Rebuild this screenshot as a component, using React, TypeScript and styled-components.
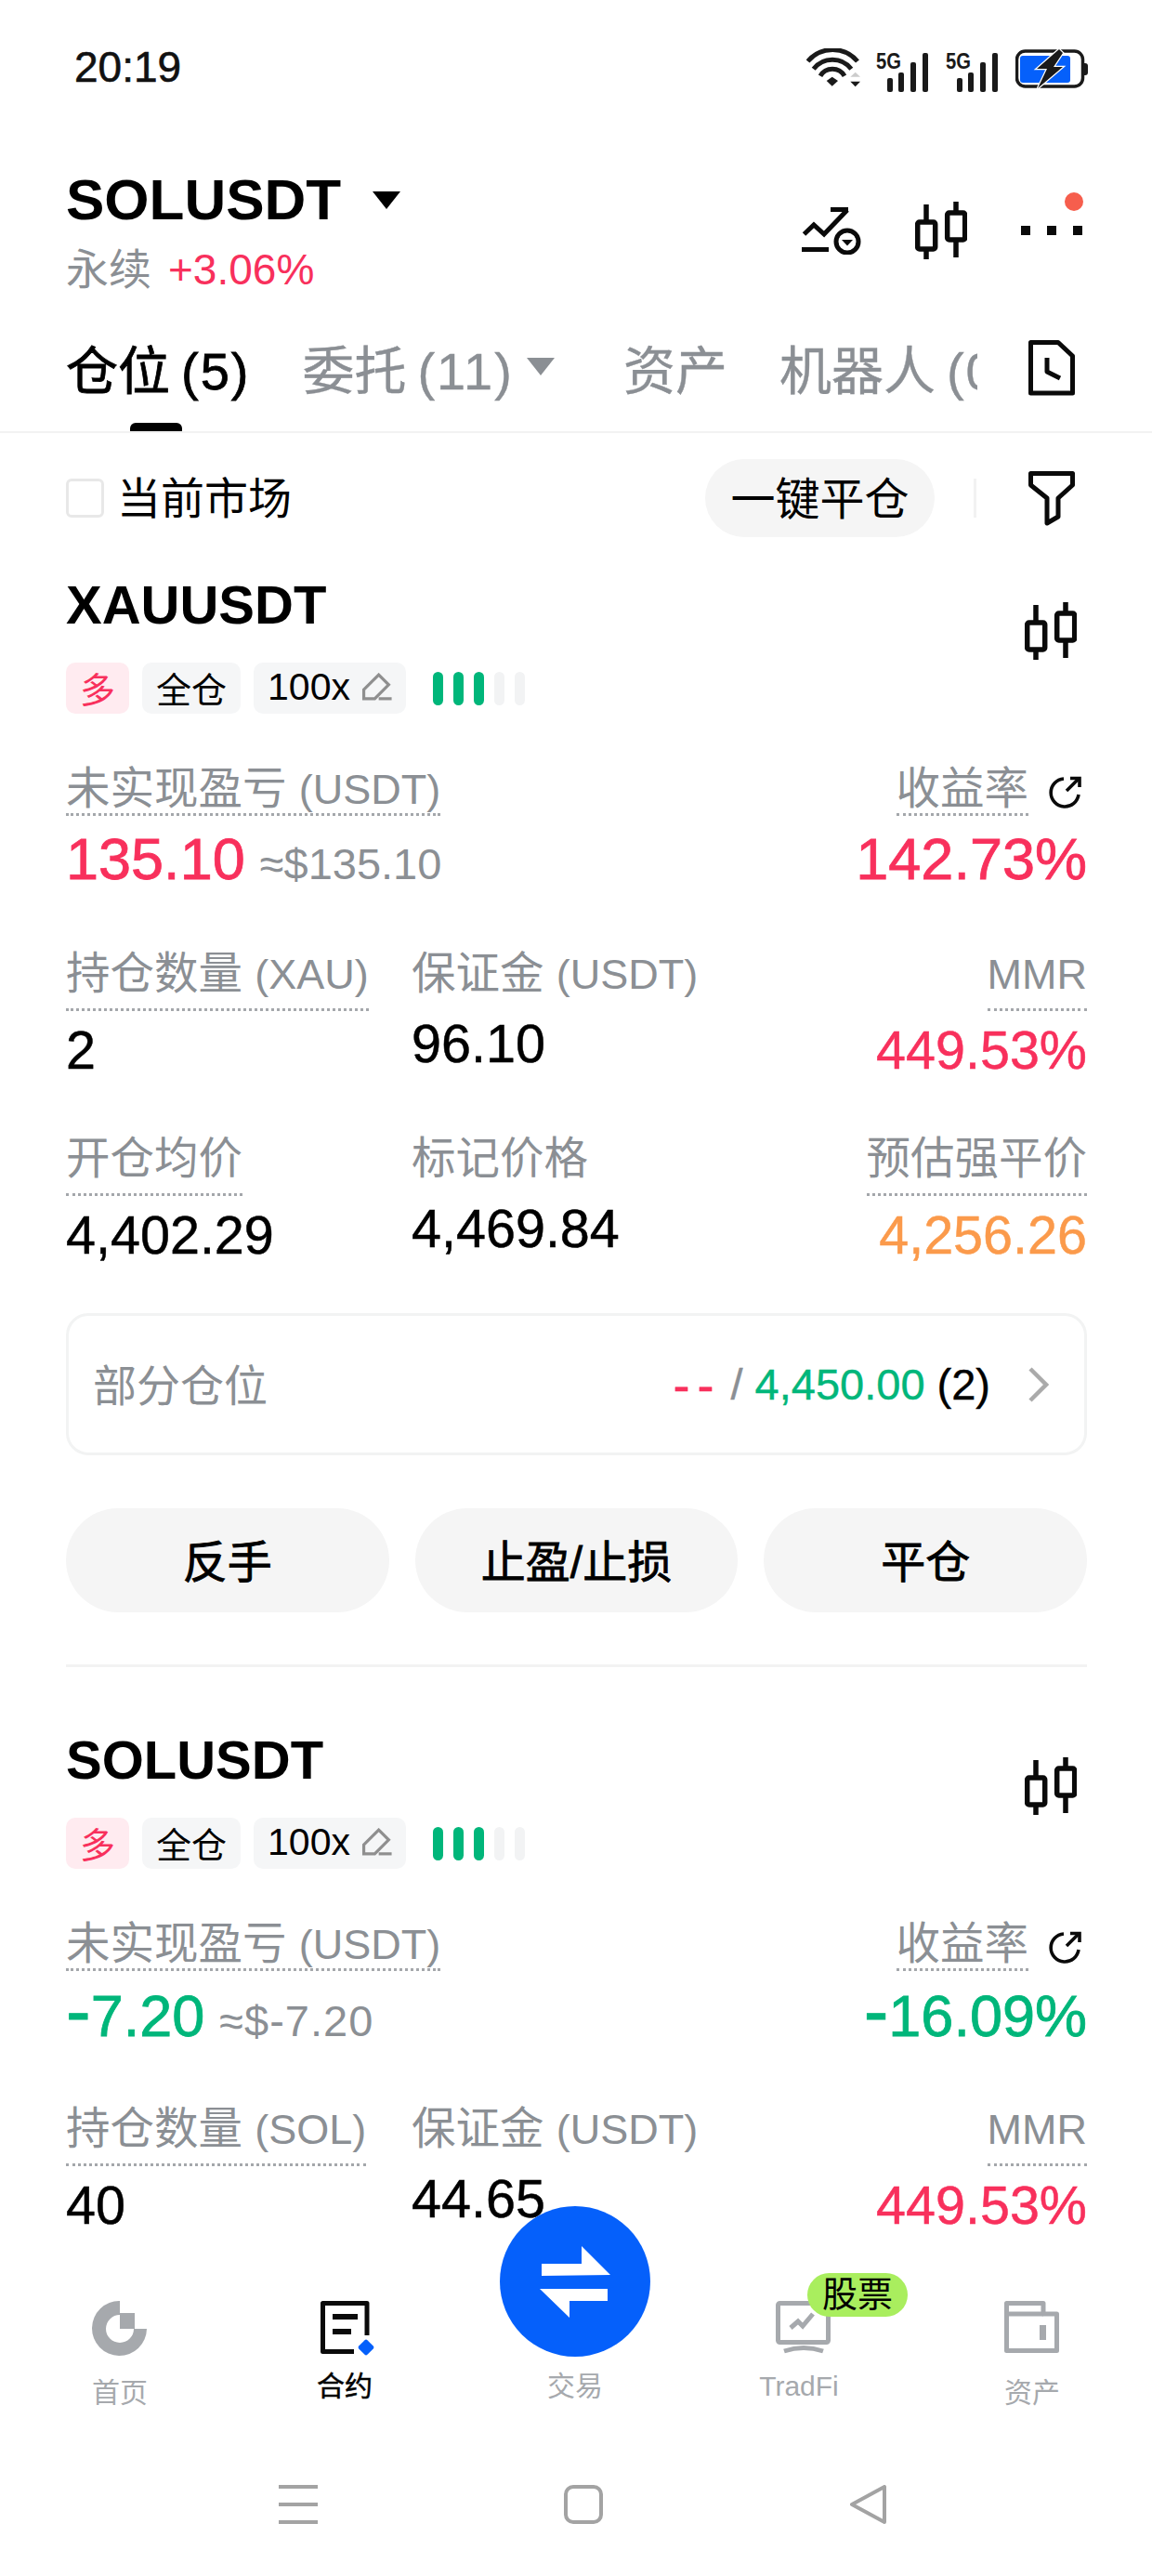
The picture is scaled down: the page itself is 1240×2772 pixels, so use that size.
import React from 'react'
import styled, { createGlobalStyle } from 'styled-components'

const RED = '#f8305c'
const GREEN = '#00b67a'
const ORANGE = '#fb9a4b'
const GREY = '#8b8f94'
const NAV_GREY = '#a6a9ad'
const BLUE = '#0560fb'

const GlobalStyle = createGlobalStyle`
  html, body {
    margin: 0;
    padding: 0;
    background: #fff;
  }
  body {
    font-family: "Liberation Sans", "Noto Sans CJK SC", sans-serif;
    color: #000;
  }
  * {
    box-sizing: border-box;
  }
`

type Tone = 'red' | 'green' | 'orange' | 'black' | 'grey'

const toneColor = (tone: Tone = 'black') => {
  if (tone === 'red') return RED
  if (tone === 'green') return GREEN
  if (tone === 'orange') return ORANGE
  if (tone === 'grey') return GREY
  return '#000'
}

function SignalIcon() {
  return (
    <svg width="57" height="50" viewBox="0 -8 57 50">
      <text x="0" y="17" fontSize="23" fontWeight="700" textLength="27" lengthAdjust="spacingAndGlyphs" fill="#1a1a1a">
        5G
      </text>
      <g fill="#1a1a1a">
        <rect x="12" y="27" width="6" height="15" rx="2" />
        <rect x="24" y="21" width="6" height="21" rx="2" />
        <rect x="37" y="10" width="6" height="32" rx="2" />
        <rect x="50" y="0" width="6" height="42" rx="2" />
      </g>
    </svg>
  )
}

function WifiIcon() {
  return (
    <svg width="60" height="44" viewBox="0 0 60 44" fill="none">
      <g stroke="#1a1a1a" strokeWidth="5">
        <path d="M1.5 14 A35 35 0 0 1 55 14" />
        <path d="M7.7 22.3 A25.6 25.6 0 0 1 48.3 22.3" />
        <path d="M15 29.7 A15 15 0 0 1 41 29.7" />
      </g>
      <path d="M21.7 35 L27.7 30.7 L34 35 L27.7 40.7 Z" fill="#1a1a1a" />
      <path d="M47.3 30.7 L52.7 25.7 L58 30.7 Z" fill="#ccc" />
      <path d="M47.3 35.7 L58 35.7 L52.7 41.3 Z" fill="#1a1a1a" />
    </svg>
  )
}

function BatteryIcon() {
  return (
    <svg width="79" height="44" viewBox="0 0 79 44" fill="none">
      <rect x="1.5" y="3" width="71" height="38" rx="9" stroke="#1a1a1a" strokeWidth="3.5" />
      <rect x="5" y="8" width="54" height="29" rx="3" fill={BLUE} />
      <path d="M73 16 h2 a3 3 0 0 1 3 3 v7 a3 3 0 0 1 -3 3 h-2 Z" fill="#1a1a1a" />
      <path
        d="M47 1 L23 22 L34 22 L24 43 L51 20 L41 20 L51 5 Z"
        fill="#1a1a1a"
        stroke="#fff"
        strokeWidth="2.5"
        paintOrder="stroke"
      />
    </svg>
  )
}

function TrendIcon() {
  return (
    <svg width="64" height="52" viewBox="0 0 64 52" fill="none">
      <path d="M2.5 30 L13 20 L24 30 L49 4" stroke="#0a0a0a" strokeWidth="5" />
      <path d="M31 3.5 H50" stroke="#0a0a0a" strokeWidth="5" />
      <rect x="0" y="44" width="29" height="5" fill="#0a0a0a" />
      <circle cx="49" cy="38" r="12" stroke="#0a0a0a" strokeWidth="5" />
      <path d="M43 36 H55 L49 42.5 Z" fill="#0a0a0a" />
    </svg>
  )
}

function CandleIcon() {
  return (
    <svg width="56" height="62" viewBox="0 0 56 62" fill="none" stroke="#0a0a0a" strokeWidth="5.5">
      <path d="M12 3 V22 M12 52 V62 M44 0 V12 M44 42 V60" />
      <rect x="2.7" y="22" width="19" height="29" rx="2" />
      <rect x="34.7" y="12" width="19" height="29" rx="2" />
    </svg>
  )
}

function DocClockIcon() {
  return (
    <svg width="50" height="60" viewBox="0 0 50 60" fill="none" stroke="#0a0a0a" strokeWidth="5" strokeLinejoin="round">
      <path d="M2.5 2.5 H32 L47.5 17 V57 H2.5 Z" />
      <path d="M20 19 V34 L34 41" />
    </svg>
  )
}

function FunnelIcon() {
  return (
    <svg width="50" height="59" viewBox="0 0 50 59" fill="none" stroke="#0a0a0a" strokeWidth="5" strokeLinejoin="round">
      <path d="M2.5 2.5 H47.5 V15 L32 29 V49 L20 56 V29 L2.5 15 Z" />
    </svg>
  )
}

function PencilIcon() {
  return (
    <svg width="33" height="30" viewBox="0 0 30 28" fill="none" stroke="#8f8f8f" strokeWidth="3">
      <path d="M2 26 V17 L17 2 L27 12 L13 26 Z" />
      <path d="M17 26 H30" />
    </svg>
  )
}

function ReturnIcon() {
  return (
    <svg width="36" height="36" viewBox="0 0 36 36" fill="none" stroke="#0a0a0a" strokeWidth="3.6">
      <path d="M16 4 A15 15 0 1 0 32 21" />
      <path d="M19 17 L32 4" />
      <path d="M23 3.5 H33 V13" />
    </svg>
  )
}

function ChevronIcon() {
  return (
    <svg width="22" height="38" viewBox="0 0 22 38" fill="none" stroke="#aaa" strokeWidth="4.5">
      <path d="M2 2 L19 19 L2 36" />
    </svg>
  )
}

function HomeIcon() {
  return (
    <svg width="60" height="60" viewBox="0 0 60 60" fill={NAV_GREY}>
      <path d="M30 0 A29.5 29.5 0 1 0 59 30 H45 A15 15 0 1 1 30 15 Z" />
      <rect x="30" y="13" width="16" height="17" />
    </svg>
  )
}

function ContractIcon() {
  return (
    <svg width="60" height="60" viewBox="0 0 60 60" fill="none">
      <path d="M50 37 V2.5 H2.5 V54.5 H36" stroke="#0a0a0a" strokeWidth="5" strokeLinejoin="round" />
      <rect x="13" y="14" width="27" height="6" fill="#0a0a0a" />
      <rect x="13" y="30" width="20" height="6" fill="#0a0a0a" />
      <rect x="42.5" y="43.5" width="13" height="13" rx="2" fill={BLUE} transform="rotate(45 49 50)" />
    </svg>
  )
}

function TradFiIcon() {
  return (
    <svg width="60" height="60" viewBox="0 0 60 60" fill="none" stroke={NAV_GREY} strokeWidth="5">
      <rect x="2.5" y="2.5" width="54" height="42" rx="2" />
      <path d="M16 29 L24 22 L29 27 L40 14" />
      <path d="M9 54 Q30 47 51 54" />
    </svg>
  )
}

function AssetsIcon() {
  return (
    <svg width="60" height="60" viewBox="0 0 60 60" fill="none" stroke={NAV_GREY} strokeWidth="5" strokeLinejoin="round">
      <path d="M2.5 2.5 H42 V14 H56.5 V53.5 H2.5 Z" />
      <path d="M2.5 14 H42" />
      <path d="M41.5 26 V42" strokeWidth="7" />
    </svg>
  )
}

function SwapIcon() {
  return (
    <svg width="162" height="162" viewBox="0 0 162 162" fill="#fff">
      <path d="M45 62 H88 V43 L119 74 L45 75 Z" />
      <path d="M43 89 L116 89 V102 H75 V120 Z" />
    </svg>
  )
}

const Screen = styled.div`
  position: relative;
  width: 1240px;
  height: 2772px;
  overflow: hidden;
  background: #fff;
`

const StatusBar = styled.div`
  display: flex;
  align-items: center;
  justify-content: space-between;
  height: 144px;
  padding: 4px 68px 0 80px;
`

const Clock = styled.span`
  font-size: 46px;
  margin-top: -4px;
  color: #111;
  -webkit-text-stroke: 0.6px #111;
`

const StatusIcons = styled.div`
  display: flex;
  align-items: center;
  gap: 18px;

  svg:first-child {
    margin-right: -3px;
  }
`

const Header = styled.header`
  display: flex;
  justify-content: space-between;
  height: 200px;
  padding: 36px 75px 0 71px;
`

const TitleRow = styled.div`
  display: flex;
  align-items: center;
  gap: 34px;
`

const Symbol = styled.h1`
  margin: 0;
  font-size: 62px;
  line-height: 70px;
  font-weight: 700;
`

const Caret = styled.span<{ $color?: string; $gap?: number }>`
  display: inline-block;
  width: 0;
  height: 0;
  border-left: 15px solid transparent;
  border-right: 15px solid transparent;
  border-top: 19px solid ${({ $color }) => $color || '#000'};
  margin-right: ${({ $gap }) => $gap || 0}px;
`

const SubRow = styled.div`
  display: flex;
  gap: 18px;
  margin-top: 10px;
  font-size: 46px;
  line-height: 60px;
  color: ${GREY};
`

const Change = styled.span`
  color: ${RED};
`

const Actions = styled.div`
  display: flex;
  align-items: center;
  gap: 58px;
  height: 62px;
  margin-top: 37px;
`

const More = styled.div`
  position: relative;
  display: flex;
  gap: 18px;
  width: 66px;
  justify-content: space-between;
`

const Dot = styled.span`
  width: 10px;
  height: 10px;
  background: #0a0a0a;
`

const RedDot = styled.span`
  position: absolute;
  right: -1px;
  top: -36px;
  width: 20px;
  height: 20px;
  border-radius: 50%;
  background: #f65e4d;
`

const TabBar = styled.nav`
  display: flex;
  align-items: stretch;
  justify-content: space-between;
  height: 122px;
  padding: 0 83px 0 71px;
  border-bottom: 2px solid #f2f2f2;
`

const TabList = styled.div`
  display: flex;
  align-items: stretch;
  gap: 56px;
  width: 981px;
  overflow: hidden;
`

const Tab = styled.div<{ $active?: boolean }>`
  position: relative;
  flex: none;
  display: flex;
  align-items: center;
  gap: 14px;
  padding-bottom: 20px;
  font-size: 56px;
  white-space: nowrap;
  color: ${({ $active }) => ($active ? '#000' : GREY)};
  -webkit-text-stroke: ${({ $active }) => ($active ? '0.8px #000' : '0.4px ' + GREY)};
`

const TabCount = styled.span`
  letter-spacing: 2px;
  margin-left: 12px;
`

const TabMark = styled.span`
  position: absolute;
  left: 69px;
  bottom: 0;
  width: 56px;
  height: 9px;
  border-radius: 6px 6px 0 0;
  background: #000;
`

const TabIcon = styled.div`
  display: flex;
  align-items: center;
  padding-bottom: 16px;
`

const FilterRow = styled.div`
  display: flex;
  align-items: center;
  justify-content: space-between;
  height: 140px;
  padding: 0 83px 0 71px;
`

const CheckLabel = styled.label`
  display: flex;
  align-items: center;
  gap: 14px;
  font-size: 47px;
`

const CheckText = styled.span`
  margin-top: -7px;
`

const CheckBox = styled.span`
  width: 41px;
  height: 42px;
  border: 3px solid #e8e8e8;
  border-radius: 6px;
`

const FilterTools = styled.div`
  display: flex;
  align-items: center;
`

const CloseAll = styled.button`
  width: 247px;
  height: 84px;
  border: none;
  border-radius: 42px;
  background: #f5f5f5;
  font: inherit;
  font-size: 48px;
  color: #000;
  padding: 0 0 6px;
  margin-right: 42px;
`

const ToolDivider = styled.span`
  width: 3px;
  height: 42px;
  background: #f2f2f2;
  margin-right: 56px;
`

const Card = styled.section`
  padding: 10px 70px 0 71px;
`

const CardHead = styled.div`
  display: flex;
  align-items: center;
  justify-content: space-between;
`

const CardSymbol = styled.h2`
  margin: 0;
  font-size: 58px;
  line-height: 70px;
  font-weight: 700;
`

const CandleSlot = styled.div`
  display: flex;
  margin: 0 11px 26px 0;
`

const Tags = styled.div`
  display: flex;
  align-items: center;
  gap: 14px;
  margin-top: 27px;
`

const Tag = styled.span<{ $long?: boolean }>`
  display: inline-flex;
  align-items: center;
  gap: 12px;
  height: 55px;
  padding: 0 15px 3px;
  border-radius: 10px;
  font-size: 38px;
  background: ${({ $long }) => ($long ? '#ffebf0' : '#f5f6f7')};
  color: ${({ $long }) => ($long ? RED : '#000')};
`

const Leverage = styled.span`
  font-size: 41px;
`

const Bars = styled.div`
  display: flex;
  gap: 11px;
  margin-left: 15px;
`

const Bar = styled.span<{ $on?: boolean }>`
  width: 11px;
  height: 36px;
  border-radius: 6px;
  background: ${({ $on }) => ($on ? GREEN : '#f2f3f4')};
`

const Pnl = styled.div`
  display: flex;
  justify-content: space-between;
  margin-top: 58px;
`

const PnlSide = styled.div<{ $end?: boolean }>`
  display: flex;
  flex-direction: column;
  align-items: ${({ $end }) => ($end ? 'flex-end' : 'flex-start')};
`

const LabelWrap = styled.div`
  display: flex;
  align-items: center;
  gap: 22px;
  margin-right: 5px;
`

const Label = styled.span<{ $tight?: boolean; $plain?: boolean }>`
  display: block;
  height: ${({ $tight, $plain }) => ($plain ? 56 : $tight ? 52 : 63)}px;
  font-size: 47.5px;
  line-height: 46px;
  white-space: nowrap;
  color: ${GREY};
  border-bottom: ${({ $plain }) => ($plain ? 'none' : '3px dotted #a4a7ab')};
`

const LabelUnit = styled.span`
  font-size: 45px;
`

const PnlValueRow = styled.div`
  display: flex;
  align-items: baseline;
  gap: 16px;
  height: 64px;
  margin-top: 14px;
`

const PnlValue = styled.span<{ $tone: Tone }>`
  font-size: 63px;
  line-height: 64px;
  white-space: nowrap;
  margin-top: ${({ $tone }) => ($tone === 'green' ? '-3px' : '0')};
  color: ${({ $tone }) => toneColor($tone)};
  -webkit-text-stroke: 0.8px ${({ $tone }) => toneColor($tone)};

  &::first-letter {
    font-size: ${({ $tone }) => ($tone === 'green' ? '80px' : 'inherit')};
  }
`

const PnlApprox = styled.span<{ $wide?: boolean }>`
  font-size: 47px;
  white-space: nowrap;
  letter-spacing: ${({ $wide }) => ($wide ? '1px' : '0')};
  color: ${GREY};
`

const MetricGrid = styled.div`
  display: grid;
  grid-template-columns: 372px 1fr auto;
  row-gap: 64px;
  margin-top: 69px;
`

const Metric = styled.div<{ $end?: boolean }>`
  display: flex;
  flex-direction: column;
  align-items: ${({ $end }) => ($end ? 'flex-end' : 'flex-start')};
`

const MetricValue = styled.span<{ $tone?: Tone }>`
  margin-top: 12px;
  font-size: 57.5px;
  line-height: 60px;
  white-space: nowrap;
  color: ${({ $tone }) => toneColor($tone)};
  -webkit-text-stroke: 0.5px ${({ $tone }) => toneColor($tone)};
`

const PartialBox = styled.div`
  display: flex;
  align-items: center;
  justify-content: space-between;
  height: 153px;
  margin-top: 54px;
  padding: 0 38px 0 26px;
  border: 3px solid #f2f3f3;
  border-radius: 24px;
  font-size: 47px;
`

const PartialTitle = styled.span`
  color: ${GREY};
  margin-top: -5px;
`

const PartialRight = styled.div`
  display: flex;
  align-items: center;
`

const PartialPart = styled.span<{ $tone?: Tone; $gap?: number }>`
  color: ${({ $tone }) => toneColor($tone)};
  -webkit-text-stroke: 0.4px ${({ $tone }) => toneColor($tone)};
  margin-right: ${({ $gap }) => $gap || 0}px;
  white-space: pre;
`

const Dashes = styled(PartialPart)`
  font-size: 54px;
  letter-spacing: 8px;
`

const ActionRow = styled.div`
  display: flex;
  gap: 28px;
  margin-top: 57px;
`

const ActionButton = styled.button`
  flex: 1;
  height: 112px;
  padding: 0 0 5px;
  border: none;
  border-radius: 56px;
  background: #f5f5f5;
  font: inherit;
  font-size: 48px;
  color: #000;
  -webkit-text-stroke: 0.8px #000;
`

const CardDivider = styled.hr`
  height: 3px;
  margin: 56px 0 55px;
  border: none;
  background: #f3f3f3;
`

const BottomNav = styled.div`
  position: absolute;
  left: 0;
  right: 0;
  bottom: 0;
  height: 362px;
  background: #fff;
`

const NavRow = styled.div`
  display: grid;
  grid-template-columns: 258px 226px 270px 212px 1fr;
  padding-top: 66px;
`

const NavItem = styled.div<{ $nudge?: number }>`
  position: relative;
  display: flex;
  flex-direction: column;
  align-items: center;
  padding-left: ${({ $nudge }) => $nudge || 0}px;
`

const NavIconSlot = styled.div<{ $nudge?: number }>`
  width: 60px;
  height: 60px;
  margin-left: ${({ $nudge }) => $nudge || 0}px;
`

const NavLabel = styled.span<{ $active?: boolean; $low?: boolean }>`
  margin-top: ${({ $low }) => ($low ? 21 : 14)}px;
  font-size: 30px;
  line-height: 36px;
  color: ${({ $active }) => ($active ? '#000' : NAV_GREY)};
  -webkit-text-stroke: ${({ $active }) => ($active ? '0.5px #000' : '0')};
`

const SwapButton = styled.div`
  position: absolute;
  top: -102px;
  left: 50%;
  margin-left: -81px;
  width: 162px;
  height: 162px;
  border-radius: 50%;
  background: ${BLUE};
`

const StockBadge = styled.span`
  position: absolute;
  top: -30px;
  left: 115px;
  width: 108px;
  height: 47px;
  border-radius: 24px;
  background: #a9ee5e;
  font-size: 38px;
  line-height: 47px;
  text-align: center;
  color: #000;
`

const SystemBar = styled.div`
  display: flex;
  align-items: center;
  justify-content: space-between;
  height: 42px;
  margin-top: 81px;
  padding: 0 284px 0 300px;
`

const MenuLines = styled.div`
  display: flex;
  flex-direction: column;
  justify-content: space-between;
  width: 42px;
  height: 42px;
`

const MenuLine = styled.span`
  height: 4px;
  background: #a3a3a3;
`

const HomeKey = styled.span`
  width: 42px;
  height: 42px;
  border: 4px solid #a3a3a3;
  border-radius: 10px;
`

type MetricData = {
  label?: string
  unit?: string
  value: string
  tone?: Tone
  plain?: boolean
  end?: boolean
}

type Position = {
  symbol: string
  pnl: string
  approx: string
  rate: string
  tone: Tone
  metrics: MetricData[]
  more?: boolean
}

const positions: Position[] = [
  {
    symbol: 'XAUUSDT',
    pnl: '135.10',
    approx: '≈$135.10',
    rate: '142.73%',
    tone: 'red',
    more: true,
    metrics: [
      { label: '持仓数量 ', unit: '(XAU)', value: '2' },
      { label: '保证金 ', unit: '(USDT)', value: '96.10', plain: true },
      { unit: 'MMR', value: '449.53%', tone: 'red', end: true },
      { label: '开仓均价', value: '4,402.29' },
      { label: '标记价格', value: '4,469.84', plain: true },
      { label: '预估强平价', value: '4,256.26', tone: 'orange', end: true },
    ],
  },
  {
    symbol: 'SOLUSDT',
    pnl: '-7.20',
    approx: '≈$-7.20',
    rate: '-16.09%',
    tone: 'green',
    metrics: [
      { label: '持仓数量 ', unit: '(SOL)', value: '40' },
      { label: '保证金 ', unit: '(USDT)', value: '44.65', plain: true },
      { unit: 'MMR', value: '449.53%', tone: 'red', end: true },
    ],
  },
]

function PositionCard({ data }: { data: Position }) {
  return (
    <Card>
      <CardHead>
        <div>
          <CardSymbol>{data.symbol}</CardSymbol>
          <Tags>
            <Tag $long>多</Tag>
            <Tag>全仓</Tag>
            <Tag>
              <Leverage>100x</Leverage>
              <PencilIcon />
            </Tag>
            <Bars>
              {[0, 1, 2, 3, 4].map((i) => (
                <Bar key={i} $on={i < 3} />
              ))}
            </Bars>
          </Tags>
        </div>
        <CandleSlot>
          <CandleIcon />
        </CandleSlot>
      </CardHead>

      <Pnl>
        <PnlSide>
          <Label $tight>
            未实现盈亏 <LabelUnit>(USDT)</LabelUnit>
          </Label>
          <PnlValueRow>
            <PnlValue $tone={data.tone}>{data.pnl}</PnlValue>
            <PnlApprox $wide={data.tone === 'green'}>{data.approx}</PnlApprox>
          </PnlValueRow>
        </PnlSide>
        <PnlSide $end>
          <LabelWrap>
            <Label $tight>收益率</Label>
            <ReturnIcon />
          </LabelWrap>
          <PnlValueRow>
            <PnlValue $tone={data.tone}>{data.rate}</PnlValue>
          </PnlValueRow>
        </PnlSide>
      </Pnl>

      <MetricGrid>
        {data.metrics.map((m) => (
          <Metric key={m.value + m.unit} $end={m.end}>
            <Label $plain={m.plain}>
              {m.label}
              {m.unit && <LabelUnit>{m.unit}</LabelUnit>}
            </Label>
            <MetricValue $tone={m.tone}>{m.value}</MetricValue>
          </Metric>
        ))}
      </MetricGrid>

      {data.more && (
        <>
          <PartialBox>
            <PartialTitle>部分仓位</PartialTitle>
            <PartialRight>
              <Dashes $tone="red" $gap={10}>
                --
              </Dashes>
              <PartialPart $tone="grey" $gap={13}>
                /
              </PartialPart>
              <PartialPart $tone="green" $gap={13}>
                4,450.00
              </PartialPart>
              <PartialPart $gap={41}>(2)</PartialPart>
              <ChevronIcon />
            </PartialRight>
          </PartialBox>
          <ActionRow>
            <ActionButton>反手</ActionButton>
            <ActionButton>止盈/止损</ActionButton>
            <ActionButton>平仓</ActionButton>
          </ActionRow>
          <CardDivider />
        </>
      )}
    </Card>
  )
}

export default function App() {
  return (
    <Screen>
      <GlobalStyle />
      <StatusBar>
        <Clock>20:19</Clock>
        <StatusIcons>
          <WifiIcon />
          <SignalIcon />
          <SignalIcon />
          <BatteryIcon />
        </StatusIcons>
      </StatusBar>

      <Header>
        <div>
          <TitleRow>
            <Symbol>SOLUSDT</Symbol>
            <Caret />
          </TitleRow>
          <SubRow>
            永续
            <Change>+3.06%</Change>
          </SubRow>
        </div>
        <Actions>
          <TrendIcon />
          <CandleIcon />
          <More>
            <Dot />
            <Dot />
            <Dot />
            <RedDot />
          </More>
        </Actions>
      </Header>

      <TabBar>
        <TabList>
          <Tab $active>
            <span>
              仓位<TabCount>(5)</TabCount>
            </span>
            <TabMark />
          </Tab>
          <Tab>
            <span>
              委托<TabCount>(11)</TabCount>
            </span>
            <Caret $color={GREY} $gap={18} />
          </Tab>
          <Tab>资产</Tab>
          <Tab>
            <span>
              机器人<TabCount>(0)</TabCount>
            </span>
          </Tab>
        </TabList>
        <TabIcon>
          <DocClockIcon />
        </TabIcon>
      </TabBar>

      <FilterRow>
        <CheckLabel>
          <CheckBox />
          <CheckText>当前市场</CheckText>
        </CheckLabel>
        <FilterTools>
          <CloseAll>一键平仓</CloseAll>
          <ToolDivider />
          <FunnelIcon />
        </FilterTools>
      </FilterRow>

      {positions.map((p) => (
        <PositionCard key={p.symbol} data={p} />
      ))}

      <BottomNav>
        <NavRow>
          <NavItem>
            <NavIconSlot>
              <HomeIcon />
            </NavIconSlot>
            <NavLabel $low>首页</NavLabel>
          </NavItem>
          <NavItem>
            <NavIconSlot $nudge={8}>
              <ContractIcon />
            </NavIconSlot>
            <NavLabel $active>合约</NavLabel>
          </NavItem>
          <NavItem>
            <SwapButton>
              <SwapIcon />
            </SwapButton>
            <NavIconSlot />
            <NavLabel>交易</NavLabel>
          </NavItem>
          <NavItem>
            <NavIconSlot $nudge={10}>
              <TradFiIcon />
            </NavIconSlot>
            <NavLabel>TradFi</NavLabel>
            <StockBadge>股票</StockBadge>
          </NavItem>
          <NavItem $nudge={16}>
            <NavIconSlot>
              <AssetsIcon />
            </NavIconSlot>
            <NavLabel $low>资产</NavLabel>
          </NavItem>
        </NavRow>
        <SystemBar>
          <MenuLines>
            <MenuLine />
            <MenuLine />
            <MenuLine />
          </MenuLines>
          <HomeKey />
          <svg width="42" height="42" viewBox="0 0 42 42" fill="none" stroke="#a3a3a3" strokeWidth="4" strokeLinejoin="round">
            <path d="M38 2 V40 L3 21 Z" />
          </svg>
        </SystemBar>
      </BottomNav>
    </Screen>
  )
}
